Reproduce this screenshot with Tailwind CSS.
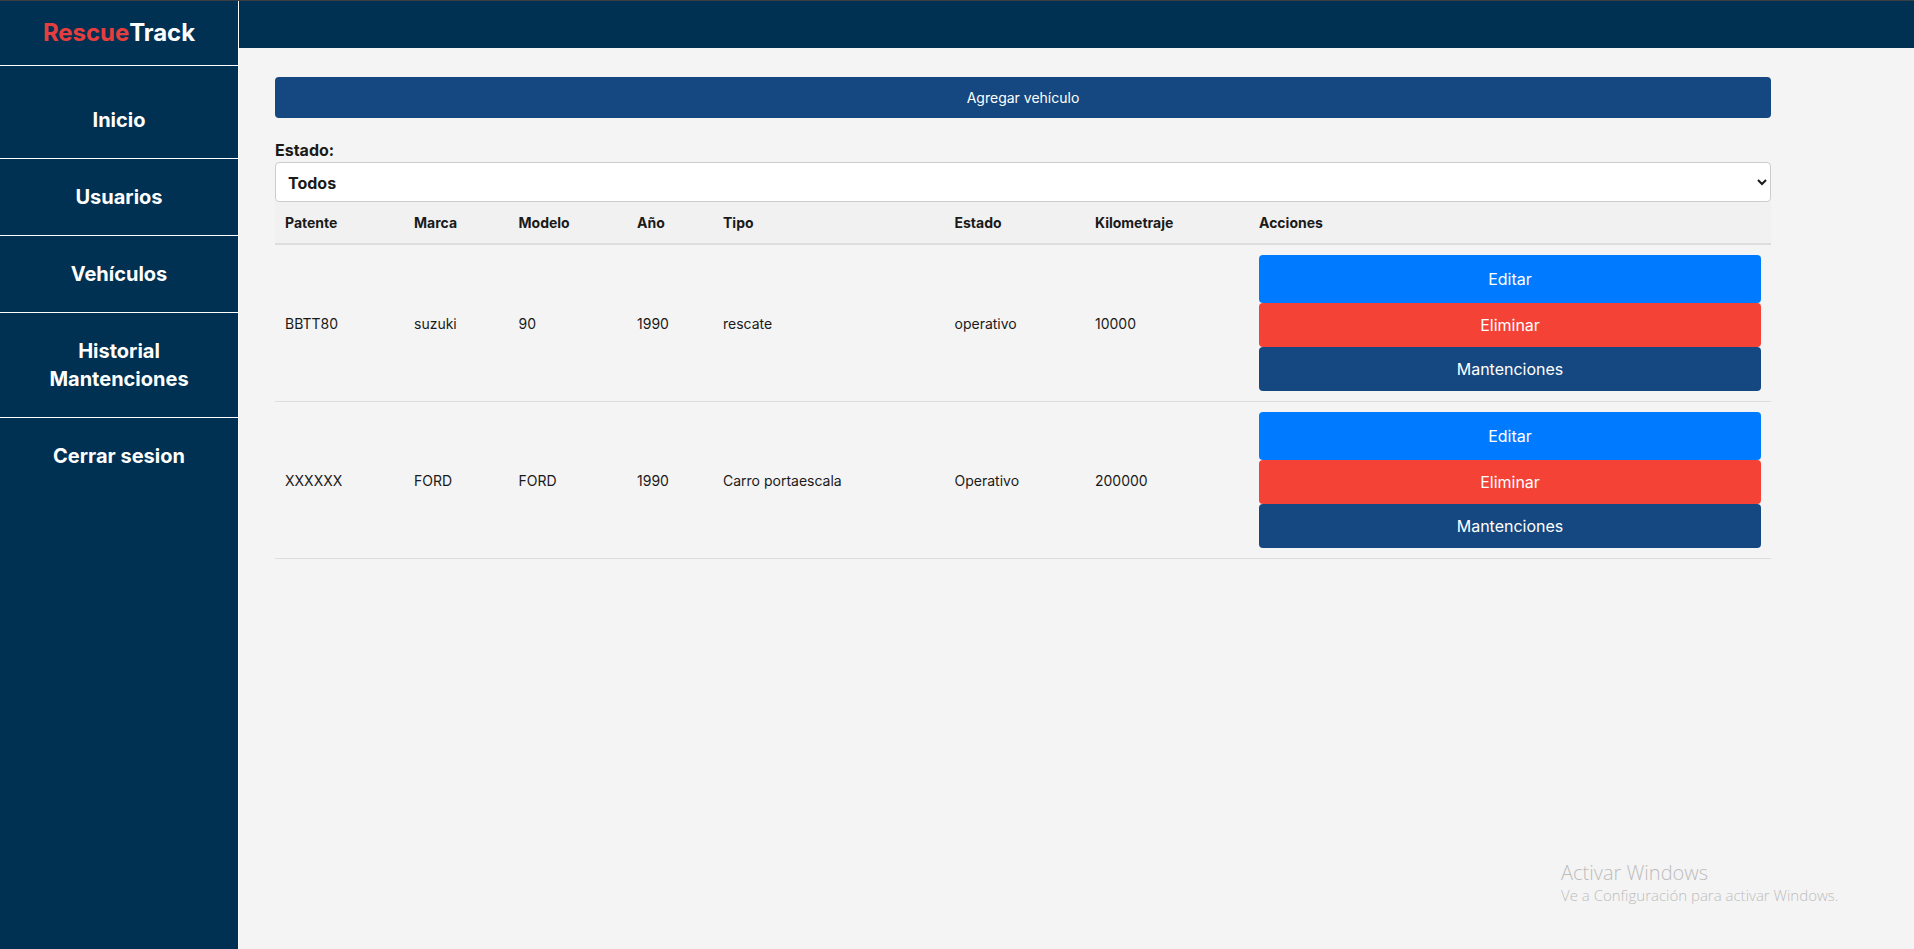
<!DOCTYPE html>
<html lang="en">
<head>
    <meta charset="UTF-8">
    <title>RescueTrack</title>
    <script src="https://cdn.jsdelivr.net/npm/@tailwindcss/browser@4"></script>
</head>
<body class="relative h-[949px] overflow-hidden bg-[#f4f4f4] font-['Inter',sans-serif] text-[#1a1a1a]">
    <div class="h-px bg-[#3a3f44]"></div>
    <div class="flex h-[948px]">
        <!-- Sidebar -->
        <aside class="w-[239px] shrink-0 border-r border-white bg-[#003153] text-white">
            <div class="box-content flex h-[64px] items-center justify-center border-b border-white text-2xl leading-none font-bold tracking-[-0.05px]">
                <span class="text-[#e53e3e]">Rescue</span><span>Track</span>
            </div>
            <nav class="pt-4 text-center text-xl leading-7 font-bold">
                <a href="#" class="block border-b border-white py-6">Inicio</a>
                <a href="#" class="block border-b border-white py-6">Usuarios</a>
                <a href="#" class="block border-b border-white py-6">Vehículos</a>
                <a href="#" class="block border-b border-white py-6">Historial<br>Mantenciones</a>
                <a href="#" class="block py-6">Cerrar sesion</a>
            </nav>
        </aside>

        <div class="min-w-0 flex-1">
            <header class="h-[47px] bg-[#003153]"></header>

            <!-- Main -->
            <main class="w-[1532px] pt-[29px] pl-9">
                <button class="block h-[41px] w-full rounded bg-[#154880] text-sm text-white">Agregar vehículo</button>

                <label for="estado" class="mt-[22px] mb-0.5 block h-5 text-base leading-5 font-bold">Estado:</label>
                <select id="estado" class="block h-10 w-full rounded border border-[#ccc] bg-white pt-0.5 pl-2 text-base font-bold">
                    <option>Todos</option>
                </select>

                <table class="w-full table-fixed border-collapse text-left text-sm">
                    <colgroup>
                        <col class="w-[129px]">
                        <col class="w-[104.5px]">
                        <col class="w-[118.5px]">
                        <col class="w-[86px]">
                        <col class="w-[231.5px]">
                        <col class="w-[140.5px]">
                        <col class="w-[164px]">
                        <col>
                    </colgroup>
                    <thead>
                        <tr class="h-[42px] border-b-2 border-[#ddd] bg-[#f1f1f1]">
                            <th class="px-2.5 font-bold">Patente</th>
                            <th class="px-2.5 font-bold">Marca</th>
                            <th class="px-2.5 font-bold">Modelo</th>
                            <th class="px-2.5 font-bold">Año</th>
                            <th class="px-2.5 font-bold">Tipo</th>
                            <th class="px-2.5 font-bold">Estado</th>
                            <th class="px-2.5 font-bold">Kilometraje</th>
                            <th class="px-2.5 font-bold">Acciones</th>
                        </tr>
                    </thead>
                    <tbody>
                        <tr class="border-b border-[#ddd]">
                            <td class="px-2.5 pt-0.5">BBTT80</td>
                            <td class="px-2.5 pt-0.5">suzuki</td>
                            <td class="px-2.5 pt-0.5">90</td>
                            <td class="px-2.5 pt-0.5">1990</td>
                            <td class="px-2.5 pt-0.5">rescate</td>
                            <td class="px-2.5 pt-0.5">operativo</td>
                            <td class="px-2.5 pt-0.5">10000</td>
                            <td class="p-2.5 text-base text-white">
                                <button class="block h-12 w-full rounded bg-[#007bff]">Editar</button>
                                <button class="block h-11 w-full rounded bg-[#f44336]">Eliminar</button>
                                <button class="block h-11 w-full rounded bg-[#154880]">Mantenciones</button>
                            </td>
                        </tr>
                        <tr class="border-b border-[#ddd]">
                            <td class="px-2.5 pt-0.5">XXXXXX</td>
                            <td class="px-2.5 pt-0.5">FORD</td>
                            <td class="px-2.5 pt-0.5">FORD</td>
                            <td class="px-2.5 pt-0.5">1990</td>
                            <td class="px-2.5 pt-0.5">Carro portaescala</td>
                            <td class="px-2.5 pt-0.5">Operativo</td>
                            <td class="px-2.5 pt-0.5">200000</td>
                            <td class="p-2.5 text-base text-white">
                                <button class="block h-12 w-full rounded bg-[#007bff]">Editar</button>
                                <button class="block h-11 w-full rounded bg-[#f44336]">Eliminar</button>
                                <button class="block h-11 w-full rounded bg-[#154880]">Mantenciones</button>
                            </td>
                        </tr>
                    </tbody>
                </table>
            </main>
        </div>
    </div>

    <!-- Windows watermark -->
    <div class="absolute top-[859px] left-[1561px] font-['Open_Sans',sans-serif] text-[#bdbdbd]">
        <p class="text-xl leading-7 font-light">Activar Windows</p>
        <p class="text-[15px] leading-[16px] font-light">Ve a Configuración para activar Windows.</p>
    </div>
</body>
</html>
